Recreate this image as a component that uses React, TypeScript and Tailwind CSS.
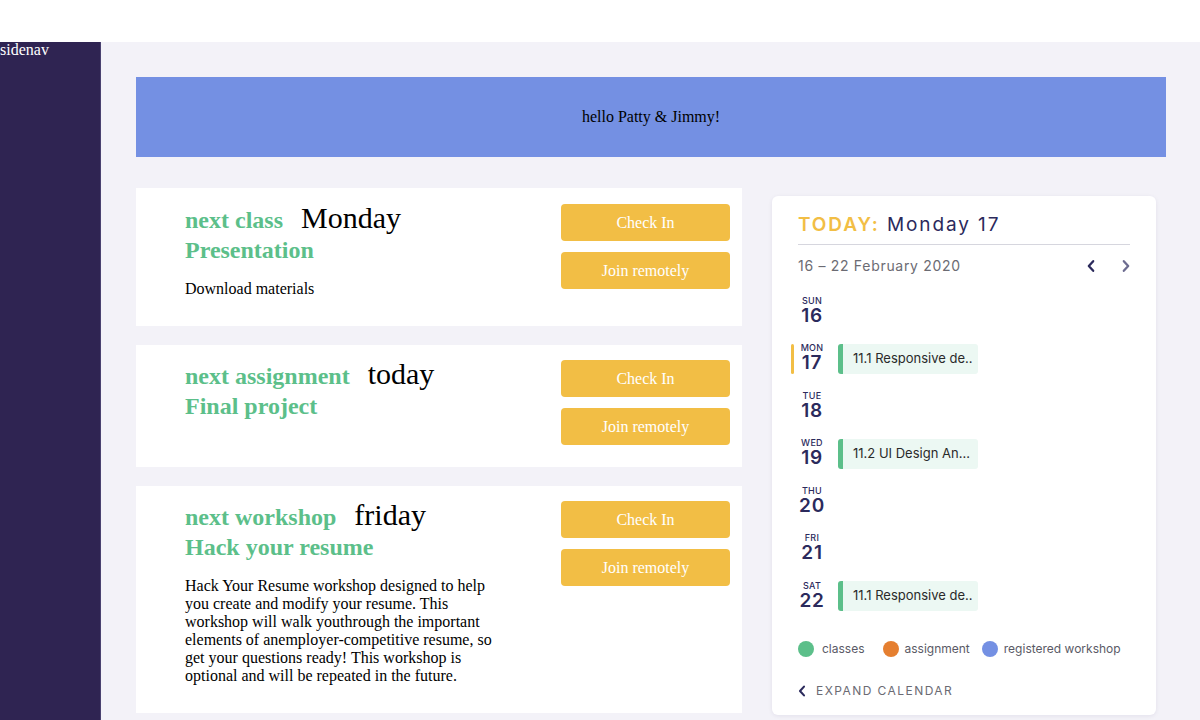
import React from 'react';

const serif = { fontFamily: '"Liberation Serif", "Times New Roman", serif' };
const sans = { fontFamily: 'Inter, "Noto Sans", sans-serif' };

type CardProps = {
  label: string;
  when: string;
  title: string;
  children: React.ReactNode;
  className: string;
};

function EventCard({ label, when, title, children, className }: CardProps) {
  return (
    <div className={`flex bg-white pl-[49px] pr-[12px] ${className}`}>
      <div className="-mt-px flex-1">
        <div className="flex items-baseline gap-[18px]">
          <span className="text-[24px] font-bold leading-[30px] text-[#5cbf8a]">{label}</span>
          <span className="text-[30px] leading-[30px] text-black">{when}</span>
        </div>
        <div className="text-[24px] font-bold leading-[30px] text-[#5cbf8a]">{title}</div>
        {children}
      </div>
      <div className="flex w-[169px] flex-col gap-[11px]">
        <button className="h-[37px] rounded-[4px] bg-[#f2be45] text-[16px] text-white">Check In</button>
        <button className="h-[37px] rounded-[4px] bg-[#f2be45] text-[16px] text-white">Join remotely</button>
      </div>
    </div>
  );
}

type Day = { dow: string; num: string; event?: string; today?: boolean };

const days: Day[] = [
  { dow: 'SUN', num: '16' },
  { dow: 'MON', num: '17', event: '11.1 Responsive de..', today: true },
  { dow: 'TUE', num: '18' },
  { dow: 'WED', num: '19', event: '11.2 UI Design An...' },
  { dow: 'THU', num: '20' },
  { dow: 'FRI', num: '21' },
  { dow: 'SAT', num: '22', event: '11.1 Responsive de..' },
];

function Chevron({ dir, className }: { dir: 'left' | 'right'; className: string }) {
  return (
    <svg viewBox="0 0 10 16" className={className} fill="none" stroke="currentColor" strokeWidth="2.6" strokeLinecap="round" strokeLinejoin="round">
      {dir === 'left' ? <path d="M7.5 2.5 2.5 8l5 5.5" /> : <path d="M2.5 2.5 7.5 8l-5 5.5" />}
    </svg>
  );
}

function Calendar() {
  return (
    <div className="mt-[8px] w-[384px] rounded-[6px] bg-white px-[26px] pb-[15px] pt-[15px] shadow-[0_1px_4px_rgba(40,30,90,0.08)]" style={sans}>
      <div className="border-b border-[#d6d6de] pb-[5px] text-[19px] leading-[28px] tracking-[0.1em]">
        <span className="font-semibold text-[#f2be45]">TODAY:</span>{' '}
        <span className="text-[#2b2a5c]">Monday 17</span>
      </div>
      <div className="flex items-center justify-between pt-[10px]">
        <span className="text-[14px] tracking-[0.05em] text-[#6b6b73]">16 – 22 February 2020</span>
        <div className="mr-[-1px] flex items-center gap-[25px]">
          <Chevron dir="left" className="h-[14px] w-[10px] text-[#2b2a5c]" />
          <Chevron dir="right" className="h-[14px] w-[10px] text-[#6d6c90]" />
        </div>
      </div>
      <div className="mt-[14px] flex flex-col gap-[7.5px]">
        {days.map((d) => (
          <div key={d.num} className="relative flex h-[40px] items-center">
            {d.today && <div className="absolute left-[-7px] top-[6px] h-[30px] w-[3px] rounded-full bg-[#f2be45]" />}
            <div className="flex w-[28px] flex-col items-center text-[#2b2a5c]">
              <span className="text-[9px] font-medium leading-[11px] tracking-[0.03em]">{d.dow}</span>
              <span className="text-[19px] font-semibold leading-[20px] tracking-[0.04em]">{d.num}</span>
            </div>
            {d.event && (
              <div className="ml-[12px] mt-[2px] flex h-[30px] w-[140px] items-center rounded-[3px] border-l-[5px] border-[#5cbf8a] bg-[#ecf8f3] pl-[10px] text-[13px] text-[#2a2a2a]">
                {d.event}
              </div>
            )}
          </div>
        ))}
      </div>
      <div className="mt-[25px] flex items-center text-[12px] text-[#5a5a66]">
        <span className="h-[16px] w-[16px] rounded-full bg-[#5cbf8a]" />
        <span className="ml-[8px]">classes</span>
        <span className="ml-[18px] h-[16px] w-[16px] rounded-full bg-[#e57f30]" />
        <span className="ml-[6px]">assignment</span>
        <span className="ml-[12px] h-[16px] w-[16px] rounded-full bg-[#7490e3]" />
        <span className="ml-[6px]">registered workshop</span>
      </div>
      <div className="mt-[24px] flex items-center gap-[10px] text-[12px] tracking-[0.12em] text-[#6b6b73]">
        <Chevron dir="left" className="h-[14px] w-[8px] text-[#2b2a5c]" />
        <span>EXPAND CALENDAR</span>
      </div>
    </div>
  );
}

export default function App() {
  return (
    <div className="min-h-screen bg-white" style={serif}>
      <div className="h-[42px] bg-white" />
      <div className="flex">
        <div className="w-[101px] shrink-0 border-r border-[#4a4270] bg-[#2f2452] text-[16px] leading-[16px] text-white">
          sidenav
        </div>
        <main className="flex-1 bg-[#f3f2f8] pb-[8px] pl-[35px] pr-[34px] pt-[35px]">
          <div className="flex h-[80px] items-center justify-center bg-[#7490e3] text-[16px] text-black">
            hello Patty &amp; Jimmy!
          </div>
          <div className="mt-[31px] flex gap-[30px]">
            <div className="flex w-[606px] flex-col gap-[19px]">
              <EventCard label="next class" when="Monday" title="Presentation" className="h-[138px] pt-[16px]">
                <p className="mt-[15px] text-[16px] leading-[18px] text-black">Download materials</p>
              </EventCard>
              <EventCard label="next assignment" when="today" title="Final project" className="h-[122px] pt-[15px]">
                {null}
              </EventCard>
              <EventCard label="next workshop" when="friday" title="Hack your resume" className="h-[227px] pt-[15px]">
                <p className="mt-[15px] w-[310px] text-[16px] leading-[18px] text-black">
                  Hack Your Resume workshop designed to help you create and modify your resume. This workshop will walk youthrough the important elements of anemployer-competitive resume, so get your questions ready! This workshop is optional and will be repeated in the future.
                </p>
              </EventCard>
            </div>
            <Calendar />
          </div>
        </main>
      </div>
    </div>
  );
}
